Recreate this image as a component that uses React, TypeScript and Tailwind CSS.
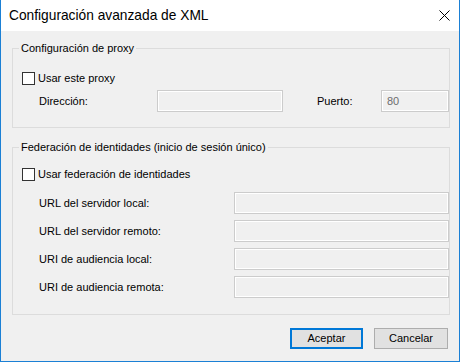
import React from "react";

function Checkbox() {
  return <span className="block w-[13px] h-[13px] shrink-0 border border-[#333333] bg-white" />;
}

function Field({ w, value }: { w: string; value?: string }) {
  return (
    <div
      className={`${w} h-[22px] shrink-0 border border-[#cccccc] bg-[#f0f0f0] shadow-[inset_0_0_0_1px_#ffffff] flex items-center pl-[5px] text-[#6d6d6d]`}
    >
      {value}
    </div>
  );
}

export default function App() {
  const rows = [
    "URL del servidor local:",
    "URL del servidor remoto:",
    "URI de audiencia local:",
    "URI de audiencia remota:",
  ];
  return (
    <div
      className="w-[460px] h-[362px] flex flex-col bg-[#f0f0f0] border-l border-r border-b border-[#1b80d5] text-black text-[11px] leading-[13px]"
      style={{ fontFamily: '"Liberation Sans", Arial, sans-serif' }}
    >
      <div className="h-[31px] shrink-0 bg-white flex items-center justify-between pl-[8px] pr-[9px]">
        <span className="text-[13.75px] leading-[16px]">Configuración avanzada de XML</span>
        <svg width="11" height="11" viewBox="0 0 11 11" className="block">
          <path d="M0.5 0.5 L10.5 10.5 M10.5 0.5 L0.5 10.5" stroke="#000" strokeWidth="1" />
        </svg>
      </div>
      <div className="flex-1 flex flex-col pt-[9px] pl-[11px] pr-[10px]">
        <fieldset className="border border-[#dcdcdc] pb-[15px]">
          <legend className="ml-[6px] px-[2px] leading-[16px]">Configuración de proxy</legend>
          <div className="mt-[16px] ml-[9px] h-[13px] flex items-center gap-[3px]">
            <Checkbox />
            <span>Usar este proxy</span>
          </div>
          <div className="mt-[5px] pl-[26px] h-[22px] flex items-center">
            <span className="w-[118px] shrink-0">Dirección:</span>
            <Field w="w-[126px]" />
            <span className="ml-[34px] w-[64px] shrink-0">Puerto:</span>
            <Field w="w-[68px]" value="80" />
          </div>
        </fieldset>
        <fieldset className="mt-[11px] border border-[#dcdcdc] pb-[16px]">
          <legend className="ml-[6px] px-[2px] leading-[16px]">
            Federación de identidades (inicio de sesión único)
          </legend>
          <div className="mt-[13px] ml-[9px] h-[13px] flex items-center gap-[3px]">
            <Checkbox />
            <span>Usar federación de identidades</span>
          </div>
          <div className="mt-[11px] flex flex-col gap-[6px]">
            {rows.map((r) => (
              <div key={r} className="pl-[26px] h-[22px] flex items-center">
                <span className="w-[195px] shrink-0">{r}</span>
                <Field w="w-[215px]" />
              </div>
            ))}
          </div>
        </fieldset>
        <div className="mt-[13px] flex justify-end gap-[11px] pr-[1px]">
          <button className="w-[73px] h-[21px] border-2 border-[#0078d7] bg-[#e1e1e1] flex items-center justify-center">
            Aceptar
          </button>
          <button className="w-[74px] h-[21px] border border-[#adadad] bg-[#e1e1e1] flex items-center justify-center">
            Cancelar
          </button>
        </div>
      </div>
    </div>
  );
}
